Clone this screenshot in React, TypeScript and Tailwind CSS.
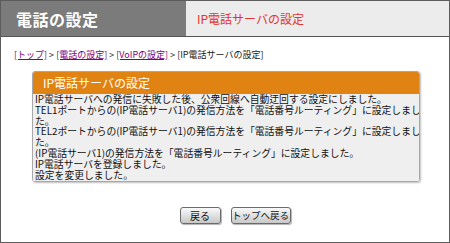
import React from "react";

const lines = [
  "IP電話サーバへの発信に失敗した後、公衆回線へ自動迂回する設定にしました。",
  "TEL1ポートからの(IP電話サーバ1)の発信方法を「電話番号ルーティング」に設定しまし",
  "た。",
  "TEL2ポートからの(IP電話サーバ1)の発信方法を「電話番号ルーティング」に設定しまし",
  "た。",
  "(IP電話サーバ1)の発信方法を「電話番号ルーティング」に設定しました。",
  "IP電話サーバを登録しました。",
  "設定を変更しました。",
];

export default function App() {
  return (
    <div className="w-[450px] h-[243px] border border-[#5c5c5c] bg-white flex flex-col font-['Noto_Sans_CJK_JP',sans-serif] overflow-hidden">
      <div className="flex h-[36px] border-b border-[#555555] shrink-0">
        <div className="w-[185px] bg-[#7b7b7b] text-white font-bold text-[16px] pl-[15px] flex items-center tracking-[0.5px]">
          電話の設定
        </div>
        <div className="flex-1 bg-[#ececec] text-[#e2352d] text-[12px] pl-[11px] flex items-center">
          IP電話サーバの設定
        </div>
      </div>

      <div className="pt-[12px] pl-[13px] text-[9px] leading-[12px] text-[#222] whitespace-nowrap">
        <a className="text-[#800080] underline">[トップ]</a>
        <span> &gt; </span>
        <a className="text-[#800080] underline">[電話の設定]</a>
        <span> &gt; </span>
        <a className="text-[#800080] underline">[VoIPの設定]</a>
        <span> &gt; [IP電話サーバの設定]</span>
      </div>

      <div className="ml-[31px] w-[388px] mt-[10px] rounded-[3px] border border-[#a8a8a8] shadow-[1px_1px_2px_rgba(0,0,0,0.25)] overflow-hidden">
        <div className="h-[22px] bg-[#e08312] text-white text-[12px] pl-[10px] flex items-center">
          IP電話サーバの設定
        </div>
        <div className="bg-[#efefef] text-[#111] text-[9.8px] leading-[10.8px] pl-[2px] pb-[1px] whitespace-nowrap">
          {lines.map((l, i) => (
            <div key={i}>{l}</div>
          ))}
        </div>
      </div>

      <div className="flex justify-center gap-[10px] mt-[25px] pl-[20px]">
        <button className="w-[41px] h-[17px] p-0 rounded-[3px] border border-[#6a6a6a] bg-gradient-to-b from-[#fafafa] to-[#c8c8c8] shadow-[1px_1px_1px_rgba(0,0,0,0.3)] text-[10px] leading-none text-[#111] whitespace-nowrap">
          戻る
        </button>
        <button className="w-[60px] h-[17px] p-0 rounded-[3px] border border-[#6a6a6a] bg-gradient-to-b from-[#fafafa] to-[#c8c8c8] shadow-[1px_1px_1px_rgba(0,0,0,0.3)] text-[9.5px] leading-none text-[#111] whitespace-nowrap">
          トップへ戻る
        </button>
      </div>
    </div>
  );
}
